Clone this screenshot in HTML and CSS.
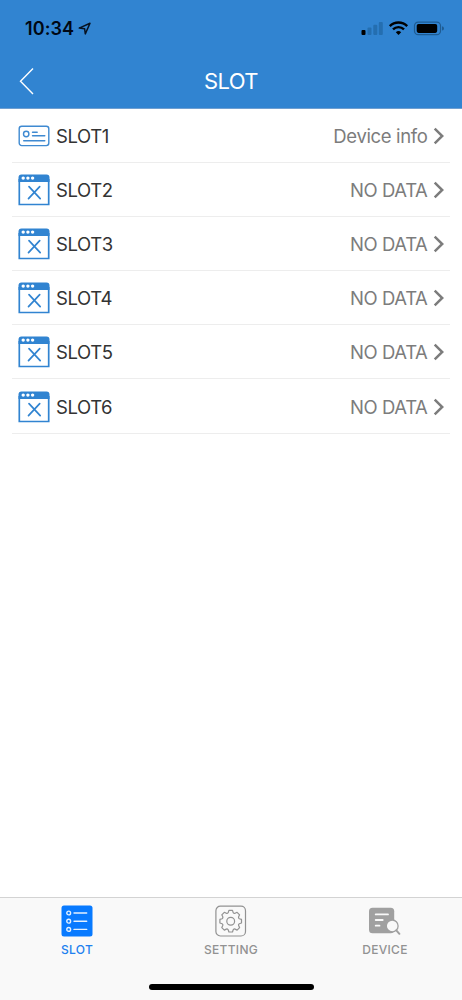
FILE: index.html
```
<!DOCTYPE html>
<html lang="en">
<head>
<meta charset="utf-8">
<title>SLOT</title>
<link rel="stylesheet" href="styles.css">
</head>
<body>
<svg class="defs" width="0" height="0">
  <symbol id="window" viewBox="0 0 32 32">
    <path d="M.5 8V3.500a3 3 0 0 1 3-3h25a3 3 0 0 1 3 3V8z" fill="#3184d1"/>
    <path d="M1.300 5v25.500h29.400V5" fill="none" stroke="#3184d1" stroke-width="1.700"/>
    <g fill="#fff"><circle cx="5.200" cy="4.100" r="1.700"/><circle cx="9.900" cy="4.100" r="1.700"/><circle cx="14.600" cy="4.100" r="1.700"/></g>
    <path d="M11 12.700l11.200 12M21.700 12.700l-11.200 12" fill="none" stroke="#3184d1" stroke-width="1.700" stroke-linecap="round"/>
  </symbol>
  <symbol id="chevron" viewBox="0 0 12 18">
    <path d="M1.700 1.700L9.200 9l-7.500 7.300" fill="none" stroke="#7c7c7c" stroke-width="2.500"/>
  </symbol>
</svg>
<div class="screen">
  <header class="header">
    <div class="status">
      <span class="time">10:34</span>
      <svg class="location" width="14" height="14" viewBox="0 0 14 14"><path d="M1.200 6.100L12 1.200 7.300 11.900 6.600 6.700z" fill="none" stroke="#071322" stroke-width="1.500" stroke-linejoin="round"/></svg>
      <svg class="indicators" width="84" height="18" viewBox="0 0 84 18">
        <rect x="1.500" y="10" width="4" height="5" rx="1"/>
        <g fill="#246eb0"><rect x="7.500" y="7.500" width="4" height="7.500" rx="1"/><rect x="13.300" y="4.800" width="4" height="10.200" rx="1"/><rect x="18.800" y="2" width="4" height="13" rx="1"/></g>
        <g fill="none" stroke="#000" stroke-width="2.400"><path d="M29.800 6.100a12.300 12.300 0 0 1 17.400 0"/><path d="M33 9.400a7.800 7.800 0 0 1 11 0"/></g>
        <path d="M35.800 12.200a3.900 3.900 0 0 1 5.400 0L38.500 15z"/>
        <rect x="54.500" y="2.100" width="26" height="12.600" rx="3.700" fill="none" stroke="#1e5b92" stroke-width="1.200"/>
        <rect x="56.700" y="4" width="20.500" height="8.900" rx="1.800"/>
        <path d="M82 6.200q2 .5 2 2.200t-2 2.200z" fill="#1e5b92"/>
      </svg>
    </div>
    <div class="nav">
      <svg class="back" width="16" height="28" viewBox="0 0 16 28"><path d="M14 1.500L1.500 14.300 14 27" fill="none" stroke="#fff" stroke-width="1.400"/></svg>
      <h1 class="title">SLOT</h1>
    </div>
  </header>
  <main class="list">
    <div class="row">
      <svg class="icon" viewBox="0 0 32 32"><g fill="none" stroke="#3f8ad1" stroke-width="1.400" stroke-linecap="round"><rect x="1.200" y="6.300" width="29.600" height="19.300" rx="2.500"/><circle cx="8.200" cy="14" r="2.700"/><path d="M14.500 12.200h4.700M14.500 15.800h12.300M5.700 20.700h21.100"/></g></svg>
      <span class="name">SLOT1</span><span class="value info">Device info</span><svg class="chevron"><use href="#chevron"/></svg>
    </div>
    <div class="row"><svg class="icon"><use href="#window"/></svg><span class="name">SLOT2</span><span class="value">NO DATA</span><svg class="chevron"><use href="#chevron"/></svg></div>
    <div class="row"><svg class="icon"><use href="#window"/></svg><span class="name">SLOT3</span><span class="value">NO DATA</span><svg class="chevron"><use href="#chevron"/></svg></div>
    <div class="row"><svg class="icon"><use href="#window"/></svg><span class="name">SLOT4</span><span class="value">NO DATA</span><svg class="chevron"><use href="#chevron"/></svg></div>
    <div class="row"><svg class="icon"><use href="#window"/></svg><span class="name">SLOT5</span><span class="value">NO DATA</span><svg class="chevron"><use href="#chevron"/></svg></div>
    <div class="row"><svg class="icon"><use href="#window"/></svg><span class="name">SLOT6</span><span class="value">NO DATA</span><svg class="chevron"><use href="#chevron"/></svg></div>
  </main>
  <footer class="footer">
    <nav class="tabs">
      <div class="tab active">
        <svg class="tab-icon" viewBox="0 0 32 32"><rect x=".5" y=".6" width="31" height="31" rx="2.500" fill="#087aff"/><g fill="none" stroke="#e4f1ff" stroke-width="1.400" stroke-linecap="round"><circle cx="7.700" cy="8" r="1.900"/><circle cx="7.700" cy="16.200" r="1.900"/><circle cx="7.700" cy="24.400" r="1.900"/><path d="M13 8h12.700M13 16.200h12.700M13 24.400h12.700"/></g></svg>
        <span class="tab-label">SLOT</span>
      </div>
      <div class="tab">
        <svg class="tab-icon" viewBox="0 0 32 32"><g fill="none" stroke="#929292" stroke-width="1.200" stroke-linejoin="round"><rect x=".9" y="1.200" width="29.600" height="29.800" rx="4.500"/><g transform="translate(15.700 16.200)"><circle r="3.900"/><path d="M-1.800-10.800H1.800L2.500-8.600Q3.400-7.400 4.400-7.900L6.400-8.900 8.900-6.400 7.900-4.400Q7.400-3.400 8.600-2.500L10.800-1.800V1.800L8.600 2.500Q7.400 3.400 7.900 4.400L8.900 6.400 6.400 8.900 4.400 7.900Q3.400 7.400 2.500 8.600L1.800 10.800H-1.800L-2.500 8.600Q-3.400 7.400-4.400 7.900L-6.400 8.900-8.900 6.400-7.900 4.400Q-7.400 3.400-8.600 2.500L-10.800 1.800V-1.800L-8.600-2.500Q-7.400-3.400-7.900-4.400L-8.900-6.400-6.400-8.900-4.400-7.900Q-3.400-7.400-2.500-8.600Z"/></g></g></svg>
        <span class="tab-label">SETTING</span>
      </div>
      <div class="tab">
        <svg class="tab-icon" viewBox="0 0 32 32"><rect x="0" y="2.700" width="25.200" height="25.600" rx="3.500" fill="#a0a0a0"/><g fill="none" stroke="#f9f9f9" stroke-width="1.800" stroke-linecap="round"><path d="M6.700 9.400h12.300M6.700 15h7M6.700 20.700h3.800"/></g><circle cx="23.200" cy="20.900" r="5.900" fill="#f9f9f9" stroke="#a0a0a0" stroke-width="1.300"/><path d="M27.300 25.400l3.100 3.400" stroke="#a0a0a0" stroke-width="2" stroke-linecap="round"/></svg>
        <span class="tab-label">DEVICE</span>
      </div>
    </nav>
    <div class="home-bar"></div>
  </footer>
</div>
</body>
</html>
```
FILE: styles.css
```
* { box-sizing: border-box; }
body { margin: 0; background: #fff; font-family: Inter, "Liberation Sans", sans-serif; }
.defs { display: none; }
.screen { width: 462px; height: 1000px; display: flex; flex-direction: column; overflow: hidden; }
.header { height: 108.5px; background: #3184d1; border-bottom: 1px solid #6f9fd1; flex: none; }
.status { height: 54px; display: flex; align-items: center; padding: 3px 18px 0 25px; }
.time { font-size: 18px; font-weight: 600; line-height: 22px; width: 50px; letter-spacing: .1px; color: #000814; white-space: nowrap; }
.location { margin-left: 3px; }
.indicators { margin-left: auto; }
.nav { height: 54px; display: grid; grid-template-columns: 60px 1fr 60px; align-items: center; }
.back { margin-left: 19px; }
.title { margin: 0; text-align: center; color: #fff; font-size: 22px; font-weight: 400; letter-spacing: -.6px; }
.list { flex: 1; padding: 0 12px; }
.row { height: 54.2px; display: flex; align-items: center; padding: 1.2px 5px 0 6px; border-bottom: 1px solid #ededed; }
.icon { width: 32px; height: 32px; flex: none; }
.name { margin-left: 6px; font-size: 18.5px; color: #333; letter-spacing: -.4px; }
.value { margin-left: auto; font-size: 18.5px; color: #7c7c7c; letter-spacing: -.4px; white-space: nowrap; }
.info { letter-spacing: -.35px; }
.chevron { width: 12px; height: 18px; margin-left: 5.5px; flex: none; }
.footer { height: 103px; background: #f9f9f9; border-top: 1px solid #d3d3d3; flex: none; }
.tabs { display: grid; grid-template-columns: repeat(3, 154px); height: 86px; padding-top: 7px; }
.tab { display: flex; flex-direction: column; align-items: center; color: #929292; }
.tab-icon { width: 32px; height: 32px; }
.tab-label { margin-top: 5px; font-size: 12px; line-height: 16px; font-weight: 500; letter-spacing: .3px; }
.active { color: #2180ef; }
.home-bar { width: 165px; height: 6px; border-radius: 3px; background: #000; margin: 0 auto; }
```
